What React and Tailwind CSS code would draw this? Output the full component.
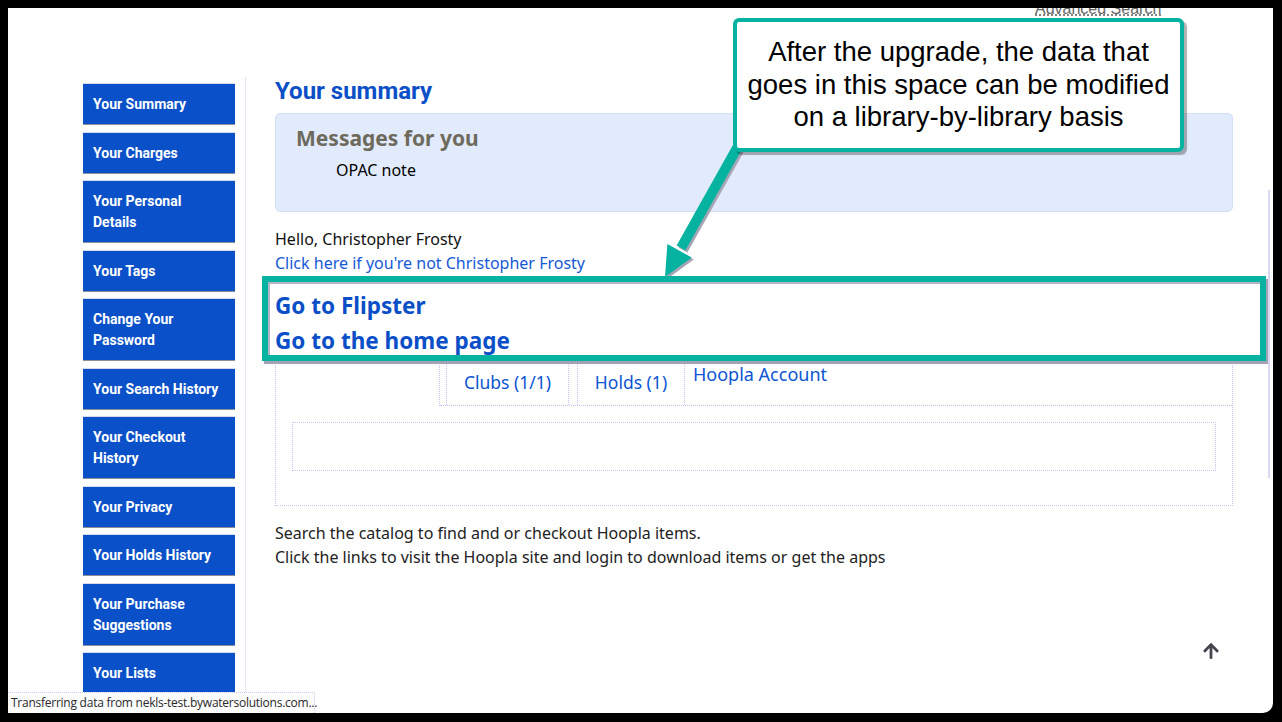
import React from "react";
import { FaArrowUp } from "react-icons/fa";

const menu = [
  "Your Summary",
  "Your Charges",
  "Your Personal Details",
  "Your Tags",
  "Change Your Password",
  "Your Search History",
  "Your Checkout History",
  "Your Privacy",
  "Your Holds History",
  "Your Purchase Suggestions",
  "Your Lists",
];

const Sidebar = () => (
  <div className="ml-[75px] mt-[6px] flex w-[152px] flex-col gap-[6.5px]">
    {menu.map((item) => (
      <div
        key={item}
        className="border-t border-b border-t-[#d9d9f2] border-b-[#8f8f9c] bg-[#0a50c8] pt-[10px] pb-[9px] pl-[10px] pr-[14px] text-[14px] leading-[21px] font-bold text-white [font-family:Roboto,sans-serif]"
      >
        {item}
      </div>
    ))}
  </div>
);

const Tabs = () => (
  <div className="h-[148px] border border-t-0 border-dotted border-[#c3c3ee]">
    <div className="flex h-[48px]">
      <div className="w-[164px] border-r border-dotted border-[#c3c3ee]" />
      <div className="flex flex-1 items-end border-b border-dotted border-[#c3c3ee]">
        <div className="ml-[6px] flex h-[46px] w-[123px] items-center justify-center border border-b-0 border-dotted border-[#c3c3ee] text-[17.5px] text-[#0b55d2]">
          Clubs (1/1)
        </div>
        <div className="ml-[8px] flex h-[46px] w-[108px] items-center justify-center border border-b-0 border-dotted border-[#c3c3ee] text-[17.5px] text-[#0b55d2]">
          Holds (1)
        </div>
        <div className="ml-[8px] self-start pt-[4px] text-[18px] leading-[24px] text-[#0b55d2]">
          Hoopla Account
        </div>
      </div>
    </div>
    <div className="mx-[16px] mt-[16px] h-[49px] border border-dotted border-[#c3c3ee]" />
  </div>
);

const Main = () => (
  <div className="ml-[10px] border-l border-dotted border-[#cfcff3] pl-[29px]">
    <div className="w-[958px] [font-family:'Noto_Sans',sans-serif]">
      <h1 className="text-[24px] leading-[28px] font-bold text-[#0b4fc8] [font-family:Roboto,sans-serif]">
        Your summary
      </h1>
      <div className="mt-[8px] h-[99px] rounded-[5px] border border-[#d3dff7] bg-[#e2ebfc] pt-[10px] pl-[20px]">
        <h2 className="text-[21px] leading-[28px] font-bold text-[#6d6a5c]">Messages for you</h2>
        <p className="mt-[6px] pl-[40px] text-[16px] leading-[24px] text-black">OPAC note</p>
      </div>
      <div className="mt-[15px] text-[16px] leading-[24px] text-[#111]">
        <p>Hello, Christopher Frosty</p>
        <p className="text-[#1559d6]">Click here if you're not Christopher Frosty</p>
      </div>
      <div className="mt-[13px] text-[22.5px] leading-[35px] font-bold text-[#0b4fc8]">
        <p>Go to Flipster</p>
        <p>Go to the home page</p>
      </div>
      <Tabs />
      <div className="mt-[15px] text-[16px] leading-[24px] text-[#222]">
        <p>Search the catalog to find and or checkout Hoopla items.</p>
        <p>Click the links to visit the Hoopla site and login to download items or get the apps</p>
      </div>
    </div>
  </div>
);

const App = () => {
  return (
    <div className="h-[722px] w-[1282px] overflow-hidden bg-black pt-[8px] pl-[8px]">
      <div className="relative h-[705px] w-[1265px] overflow-hidden rounded-br-[10px] bg-white">
        <div className="-mt-[12px] h-[81px] pl-[1027px]">
          <span className="text-[16px] leading-[18px] text-[#666] underline decoration-dotted [font-family:'Liberation_Sans',Arial,sans-serif]">
            Advanced Search
          </span>
        </div>
        <div className="flex">
          <Sidebar />
          <Main />
        </div>

        {/* scrollbar edge */}
        <div className="absolute left-[1260px] top-[182px] h-[288px] w-[2px] bg-[#d9d9f3]" />

        {/* annotation: arrow */}
        <svg className="absolute left-[642px] top-[132px]" width="100" height="150" viewBox="0 0 100 150">
          <g transform="translate(2,2)" fill="#a5a5b5" stroke="#a5a5b5">
            <line x1="87" y1="8" x2="31" y2="108" strokeWidth="10" />
            <polygon points="15,137 41.8,117.6 17.4,104" strokeWidth="0" />
          </g>
          <g fill="#05b3a0" stroke="#05b3a0">
            <line x1="87" y1="8" x2="31" y2="108" strokeWidth="10" />
            <polygon points="15,137 41.8,117.6 17.4,104" strokeWidth="0" />
          </g>
        </svg>

        {/* annotation: callout */}
        <div className="absolute left-[725px] top-[10px] flex h-[134px] w-[451px] items-center justify-center rounded-[6px] border-[4px] border-[#05b3a0] bg-white shadow-[3px_3px_1px_rgba(0,0,0,0.3)]">
          <p className="text-center text-[27.5px] leading-[32.5px] text-black [font-family:'Liberation_Sans',Arial,sans-serif]">
            After the upgrade, the data that
            <br />
            goes in this space can be modified
            <br />
            on a library-by-library basis
          </p>
        </div>

        {/* annotation: highlight box */}
        <div className="absolute left-[254px] top-[268px] h-[85px] w-[1004px] border-[6px] border-[#05b3a0] shadow-[2px_3px_0_#a3a3b3,inset_2px_2px_0_#b5b5c5]" />

        {/* back to top */}
        <FaArrowUp className="absolute left-[1194px] top-[634px] text-[#454550]" size={18} />

        {/* browser status bar */}
        <div className="absolute bottom-0 left-0 flex h-[21px] w-[307px] items-center whitespace-nowrap border-t border-r border-dotted border-[#c9c9ee] bg-[#fbfbfb] pl-[3px] text-[12px] text-[#2a2a2a] [font-family:'Open_Sans',sans-serif] tracking-[-0.25px]">
          Transferring data from nekls-test.bywatersolutions.com...
        </div>
      </div>
    </div>
  );
};

export default App;
